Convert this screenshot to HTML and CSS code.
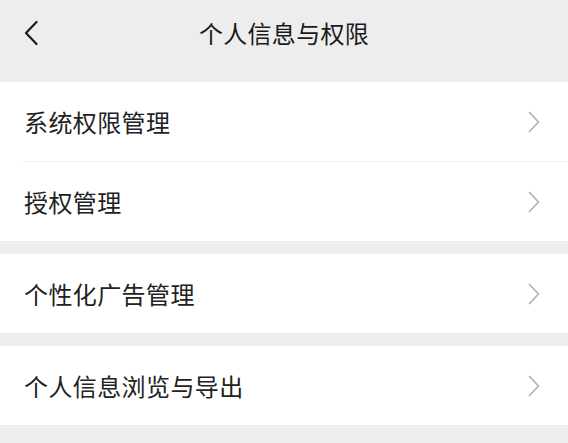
FILE: index.html
```html
<!DOCTYPE html>
<html lang="zh-CN">
<head>
<meta charset="utf-8">
<title>个人信息与权限</title>
<link rel="stylesheet" href="styles.css">
</head>
<body>
<div class="page">
  <header class="nav">
    <span class="back">
      <svg width="16" height="26" viewBox="0 0 16 26"><path d="M13.5 2 L3 13 L13.5 24" fill="none" stroke="#1c1c1c" stroke-width="2.2" stroke-linecap="round" stroke-linejoin="round"/></svg>
    </span>
    <h1 class="title">个人信息与权限</h1>
  </header>

  <section class="group">
    <div class="row"><span class="label">系统权限管理</span><span class="arrow"><svg width="14" height="22" viewBox="0 0 14 22"><path d="M2.5 1.5 L11.5 11 L2.5 20.5" fill="none" stroke="#b4b4b4" stroke-width="1.8" stroke-linecap="round" stroke-linejoin="round"/></svg></span></div>
    <div class="divider"></div>
    <div class="row"><span class="label">授权管理</span><span class="arrow"><svg width="14" height="22" viewBox="0 0 14 22"><path d="M2.5 1.5 L11.5 11 L2.5 20.5" fill="none" stroke="#b4b4b4" stroke-width="1.8" stroke-linecap="round" stroke-linejoin="round"/></svg></span></div>
  </section>

  <section class="group">
    <div class="row"><span class="label">个性化广告管理</span><span class="arrow"><svg width="14" height="22" viewBox="0 0 14 22"><path d="M2.5 1.5 L11.5 11 L2.5 20.5" fill="none" stroke="#b4b4b4" stroke-width="1.8" stroke-linecap="round" stroke-linejoin="round"/></svg></span></div>
  </section>

  <section class="group">
    <div class="row"><span class="label">个人信息浏览与导出</span><span class="arrow"><svg width="14" height="22" viewBox="0 0 14 22"><path d="M2.5 1.5 L11.5 11 L2.5 20.5" fill="none" stroke="#b4b4b4" stroke-width="1.8" stroke-linecap="round" stroke-linejoin="round"/></svg></span></div>
  </section>
</div>
</body>
</html>
```

FILE: styles.css
```css
* { box-sizing: border-box; }
html, body {
  margin: 0;
  padding: 0;
  background: #ededed;
}
body {
  font-family: "Noto Sans CJK SC", "Noto Sans", sans-serif;
  color: #1c1c1c;
  width: 568px;
  height: 443px;
  overflow: hidden;
}
.page {
  display: flex;
  flex-direction: column;
  gap: 13px;
}
.nav {
  height: 69px;
  display: flex;
  align-items: flex-start;
  justify-content: center;
  position: relative;
}
.back {
  position: absolute;
  left: 23px;
  top: 20px;
  width: 16px;
  height: 26px;
  display: flex;
}
.title {
  margin: 0;
  font-size: 24px;
  font-weight: normal;
  line-height: 66px;
  height: 66px;
  color: #1a1a1a;
  letter-spacing: 0.3px;
}
.group {
  background: #ffffff;
  display: flex;
  flex-direction: column;
}
.row {
  height: 79px;
  display: flex;
  align-items: center;
  justify-content: space-between;
  padding: 0 27px 0 24px;
}
.label {
  font-size: 24px;
  line-height: 32px;
  color: #222222;
  letter-spacing: 0.4px;
}
.arrow {
  display: flex;
  width: 14px;
  height: 22px;
}
.divider {
  height: 1px;
  margin-left: 23px;
  background: #efefef;
}
```
